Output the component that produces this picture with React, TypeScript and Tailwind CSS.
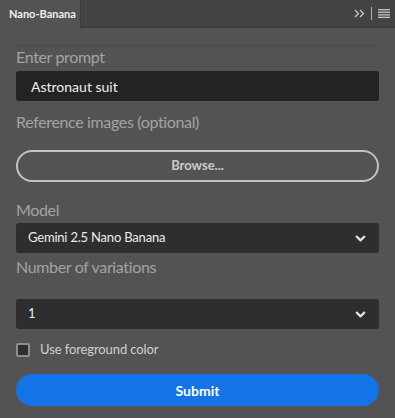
import { ChevronDown } from "lucide-react";

const font = { fontFamily: "Lato, 'Noto Sans', sans-serif" };

function SelectBox({ value }: { value: string }) {
  return (
    <div className="flex h-[30px] items-center justify-between rounded-[3px] bg-[#2e2e2e] pl-[12px] pr-[11px] text-[13px] tracking-[-0.2px] text-[#ececec]">
      <span>{value}</span>
      <ChevronDown size={15} strokeWidth={3.5} className="text-[#e0e0e0]" />
    </div>
  );
}

const labelCls = "text-[16px] leading-[20px] tracking-[-0.35px] text-[#a3a3a3]";

export default function App() {
  return (
    <div className="h-[418px] w-[395px] bg-[#535353]" style={font}>
      <div className="flex h-[28px] items-stretch border-b border-[#3a3a3a] bg-[#434343]">
        <div className="flex w-[81px] items-center border-r border-[#3a3a3a] bg-[#535353] pl-[9px] text-[11px] font-bold text-[#f0f0f0] -mb-px">
          Nano-Banana
        </div>
        <div className="flex-1" />
        <div className="flex items-center gap-[6px] pr-[5px] text-[#c8c8c8]">
          <svg width="11" height="9" viewBox="0 0 11 9" fill="none" stroke="#d0d0d0" strokeWidth="1.2">
            <path d="M1 1l3.5 3.5L1 8M6 1l3.5 3.5L6 8" />
          </svg>
          <div className="h-[13px] w-px bg-[#b0b0b0]" />
          <svg width="12" height="9" viewBox="0 0 12 9" fill="#c8c8c8">
            <rect x="0" y="0" width="12" height="1.3" />
            <rect x="0" y="2.6" width="12" height="1.3" />
            <rect x="0" y="5.2" width="12" height="1.3" />
            <rect x="0" y="7.7" width="12" height="1.3" />
          </svg>
        </div>
      </div>

      <div className="px-[16px] pt-[17px]">
        <div className="h-px bg-[#494949]" />

        <div className={`mt-[1px] ${labelCls}`}>Enter prompt</div>
        <div className="mt-[4px] flex h-[30px] items-center rounded-[3px] bg-[#232323] px-[15px] text-[14px] text-[#f0f0f0]">
          Astronaut suit
        </div>

        <div className={`mt-[11px] ${labelCls}`}>Reference images (optional)</div>
        <button className="mt-[18px] flex h-[32px] w-full items-center justify-center rounded-full border-2 border-[#c2c2c2] text-[13px] font-bold text-[#cacaca]">
          Browse...
        </button>

        <div className={`mt-[18px] ${labelCls}`}>Model</div>
        <div className="mt-[3px]">
          <SelectBox value="Gemini 2.5 Nano Banana" />
        </div>

        <div className={`mt-[4px] ${labelCls}`}>Number of variations</div>
        <div className="mt-[22px]">
          <SelectBox value="1" />
        </div>

        <label className="mt-[11px] flex h-[20px] items-center gap-[10px] text-[13px] tracking-[-0.1px] text-[#cfcfcf]">
          <span className="h-[14px] w-[14px] rounded-[2px] border-2 border-[#8e8e8e] bg-[#2f2f2f]" />
          Use foreground color
        </label>

        <button className="mt-[14px] flex h-[32px] w-full items-center justify-center rounded-full bg-[#1473e6] text-[14px] font-bold text-white">
          Submit
        </button>
      </div>
    </div>
  );
}
